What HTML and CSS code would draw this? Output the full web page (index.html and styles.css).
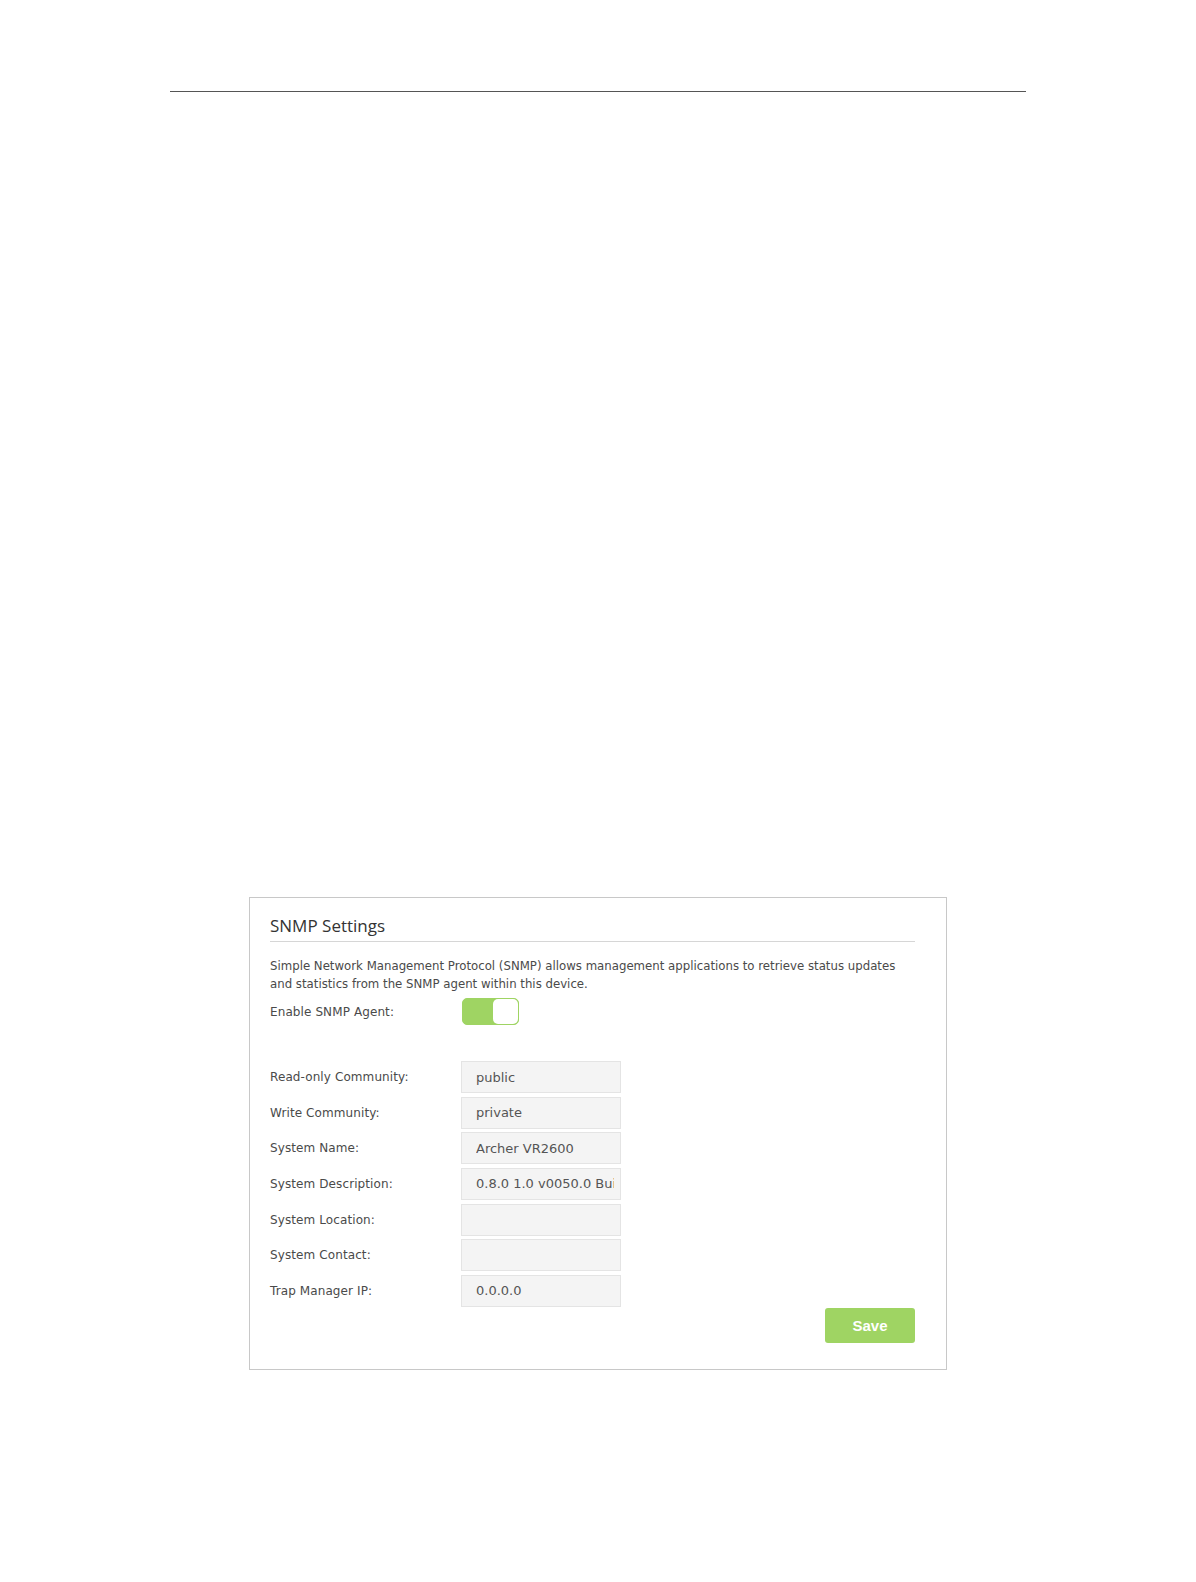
FILE: index.html
```html
<!DOCTYPE html>
<html lang="en">

<head>
  <meta charset="UTF-8">
  <title>SNMP Settings</title>
  <link rel="stylesheet" href="styles.css">
</head>

<body>

  <div class="page-rule"></div>

  <div class="panel">
    <h3 class="panel-title">SNMP Settings</h3>
    <p class="panel-desc">
      Simple Network Management Protocol (SNMP) allows management applications to retrieve status updates<br>
      and statistics from the SNMP agent within this device.
    </p>

    <div class="row row-toggle">
      <label class="row-label">Enable SNMP Agent:</label>
      <div class="toggle on">
        <span class="toggle-knob"></span>
      </div>
    </div>

    <div class="fields">
      <div class="row">
        <label class="row-label">Read-only Community:</label>
        <input class="field" value="public" />
      </div>
      <div class="row">
        <label class="row-label">Write Community:</label>
        <input class="field" value="private" />
      </div>
      <div class="row">
        <label class="row-label">System Name:</label>
        <input class="field" value="Archer VR2600" />
      </div>
      <div class="row">
        <label class="row-label">System Description:</label>
        <input class="field" value="0.8.0 1.0 v0050.0 Build 160101 Rel.12345n" />
      </div>
      <div class="row">
        <label class="row-label">System Location:</label>
        <input class="field" value="" />
      </div>
      <div class="row">
        <label class="row-label">System Contact:</label>
        <input class="field" value="" />
      </div>
      <div class="row">
        <label class="row-label">Trap Manager IP:</label>
        <input class="field" value="0.0.0.0" />
      </div>
    </div>

    <div class="actions">
      <button type="button" class="btn-save">Save</button>
    </div>
  </div>

</body>

</html>
```

FILE: styles.css
```css
body {
  margin: 0;
  background: #ffffff;
  font-family: 'DejaVu Sans', Verdana, sans-serif;
  color: #4a4a4a;
}

.page-rule {
  margin: 91px 0 0 170px;
  width: 856px;
  border-top: 1px solid #555555;
}

.panel {
  box-sizing: border-box;
  width: 698px;
  margin: 805px 0 0 249px;
  padding: 16px 31px 26px 20px;
  border: 1px solid #c8c8c8;
}

.panel-title {
  margin: 0;
  padding-bottom: 3px;
  border-bottom: 1px solid #d6d6d6;
  font-family: 'Open Sans', 'Noto Sans', sans-serif;
  font-size: 17px;
  font-weight: normal;
  line-height: 24px;
  color: #333333;
}

.panel-desc {
  margin: 15px 0 0;
  font-size: 11.75px;
  line-height: 18px;
  color: #4a4a4a;
}

.row {
  display: flex;
  align-items: center;
}

.row-label {
  width: 191px;
  flex-shrink: 0;
  font-size: 12px;
  letter-spacing: 0.1px;
  color: #4a4a4a;
}

.row-toggle {
  margin-top: 5px;
}

.row-toggle .row-label {
  width: 192px;
}

.toggle {
  box-sizing: border-box;
  display: flex;
  justify-content: flex-end;
  width: 57px;
  height: 27px;
  border-radius: 5px;
  background: #9fd463;
  border: 1px solid #9fd463;
}

.toggle-knob {
  box-sizing: border-box;
  width: 25px;
  height: 25px;
  border-radius: 5px;
  background: #ffffff;
}

.fields {
  margin-top: 36px;
  display: flex;
  flex-direction: column;
  gap: 3.67px;
}

.field {
  box-sizing: border-box;
  width: 160px;
  height: 32px;
  margin: 0;
  padding: 0 6px 0 14px;
  border: 1px solid #e4e4e4;
  background: #f4f4f4;
  font-family: 'DejaVu Sans', Verdana, sans-serif;
  font-size: 13px;
  color: #555555;
  outline: none;
}

.actions {
  display: flex;
  justify-content: flex-end;
  margin-top: 1px;
}

.btn-save {
  width: 90px;
  height: 35px;
  border: none;
  border-radius: 3px;
  background: #9fd463;
  color: #ffffff;
  font-family: 'Liberation Sans', Arial, sans-serif;
  font-size: 15px;
  font-weight: bold;
  cursor: pointer;
}
```
